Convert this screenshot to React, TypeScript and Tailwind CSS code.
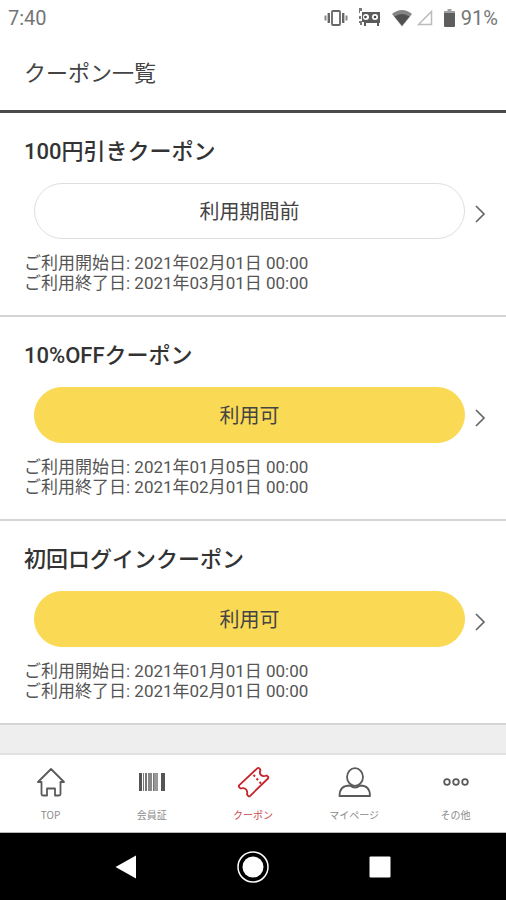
import type { ReactNode } from "react";

type Coupon = {
  title: string;
  status: string;
  available: boolean;
  start: string;
  end: string;
};

const coupons: Coupon[] = [
  { title: "100円引きクーポン", status: "利用期間前", available: false, start: "2021年02月01日 00:00", end: "2021年03月01日 00:00" },
  { title: "10%OFFクーポン", status: "利用可", available: true, start: "2021年01月05日 00:00", end: "2021年02月01日 00:00" },
  { title: "初回ログインクーポン", status: "利用可", available: true, start: "2021年01月01日 00:00", end: "2021年02月01日 00:00" },
];

function StatusBar() {
  return (
    <div className="flex h-9 items-center justify-between px-2 text-[20px] leading-5 text-[#757575]">
      <span>7:40</span>
      <div className="flex items-center">
        <svg className="mr-2.5 h-4 w-6" viewBox="0 0 24 16" fill="none" stroke="#666" aria-hidden="true">
          <rect x="8" y="1" width="8" height="14" rx="1" strokeWidth="1.8" />
          <path d="M4.8 3v10M19.2 3v10" strokeWidth="2.4" />
          <path d="M1.500 5.500v5M22.500 5.500v5" strokeWidth="2" stroke="#888" />
        </svg>
        <svg className="mr-2.5 h-5 w-[23px]" viewBox="0 0 23 20" aria-hidden="true">
          <path d="M1 0h3v3H2v2H1z" fill="#777" />
          <path d="M4 4h18v11h-1v3h-2v-3H8v3H6v-4H4z" fill="#5c5c5c" />
          <path d="M1 8h2v3H1zM1 13h3v4H2v-2H1z" fill="#777" />
          <circle cx="8" cy="9" r="3" fill="#fff" />
          <circle cx="17" cy="9" r="3" fill="#fff" />
          <circle cx="7.500" cy="9" r="1.3" fill="#444" />
          <circle cx="17" cy="9" r="1.3" fill="#444" />
        </svg>
        <svg className="mr-1 h-[18px] w-[22px]" viewBox="0 0 22 18" aria-hidden="true">
          <path d="M1 5Q11-3 21 5L11 17.500z" fill="#858585" />
          <path d="M3.500 7.500Q11 2.500 18.500 7.500L11 16.500z" fill="#505050" />
        </svg>
        <svg className="mr-[11px] h-4 w-4" viewBox="0 0 16 16" fill="none" stroke="#bcbcbc" strokeWidth="1.5" aria-hidden="true">
          <path d="M14.500 1.500v13h-13z" />
        </svg>
        <svg className="mr-1.5 h-[18px] w-[11px]" viewBox="0 0 11 18" aria-hidden="true">
          <path d="M3.500 0h4v2H11v3H0V2h3.500z" fill="#a0a0a0" />
          <path d="M0 4h11v13q0 1-1 1H1q-1 0-1-1z" fill="#5e5e5e" />
        </svg>
        <span>91%</span>
      </div>
    </div>
  );
}

function CouponCard({ coupon }: { coupon: Coupon }) {
  const look = coupon.available ? "border-[#fada54] bg-[#fada54]" : "border-[#dedede] bg-white";
  return (
    <li className="border-b-2 border-[#d4d4d4] bg-white px-6 pt-[25px] pb-[22px]">
      <h2 className="text-[22px] leading-7 font-medium text-[#333]">{coupon.title}</h2>
      <div className="-mr-3 mt-[17px] ml-2.5 flex items-center gap-2">
        <button type="button" className={`h-14 flex-1 rounded-full border pt-0.5 text-[20px] text-[#444] ${look}`}>
          {coupon.status}
        </button>
        <a href="#detail" aria-label={`${coupon.title}の詳細`} className="mt-1.5">
          <svg className="h-5 w-[21px]" viewBox="0 0 21 20" fill="none" stroke="#666" strokeWidth="1.7" aria-hidden="true">
            <path d="M3 2l8 8-8 8" />
          </svg>
        </a>
      </div>
      <div className="mt-3.5 text-[17px] leading-5 text-[#555]">
        <p>ご利用開始日: {coupon.start}</p>
        <p>ご利用終了日: {coupon.end}</p>
      </div>
    </li>
  );
}

function Tab({ label, active = false, children }: { label: string; active?: boolean; children: ReactNode }) {
  return (
    <a
      href="#tab"
      aria-current={active ? "page" : undefined}
      className={`flex flex-1 flex-col items-center pt-2.5 font-['Noto_Sans_CJK_JP',sans-serif] text-[10px] leading-4 ${active ? "text-[#cc4a50]" : "text-[#8c8c8c]"}`}
    >
      <svg className="mb-2 h-[34px] w-9" viewBox="0 0 36 34" fill="none" stroke={active ? "#c4242b" : "#5a5a5a"} strokeWidth="1.8" strokeLinejoin="round" aria-hidden="true">
        {children}
      </svg>
      <span>{label}</span>
    </a>
  );
}

const bars: [number, number, string][] = [
  [5, 3, "#555"],
  [9, 1, "#777"],
  [11, 2, "#777"],
  [14, 4, "#888"],
  [19, 1, "#777"],
  [20, 4, "#999"],
  [27, 4, "#555"],
];

function TabBar() {
  return (
    <nav className="flex h-20 border-t-2 border-b border-t-[#e2e2e2] border-b-[#b8b8b8] bg-white">
      <Tab label="TOP">
        <path d="M18 4L5 17h3.500v12q0 1.500 1.500 1.500h4v-7h8v7h4q1.500 0 1.500-1.500V17H31z" />
      </Tab>
      <Tab label="会員証">
        {bars.map(([x, width, fill]) => (
          <rect key={x} x={x} y="8" width={width} height="18" fill={fill} stroke="none" />
        ))}
      </Tab>
      <Tab label="クーポン" active>
        <path d="M22.500 3.200L4.300 20.200Q3.300 21.200 4.200 22.200L5.400 23.500Q9.500 22.300 11.200 24.500Q12.800 26.800 12 29.500L13.200 31Q14.200 31.800 15.200 30.800L33 13.500Q33.800 12.500 32.800 11.500L31.500 10.500Q28 12 26 10T25.500 5L24.500 3.500Q23.500 2.400 22.500 3.200z" />
        <path d="M18.500 10l1.500 1.500m1.500 2l1.500 1.500m1.500 2l1.500 1.500" strokeWidth="2" />
      </Tab>
      <Tab label="マイページ">
        <ellipse cx="19" cy="12" rx="8" ry="8.800" />
        <path d="M14 20.500Q3.500 20.500 3.500 31h30.500q0-10.500-10-10.500Q19 24.500 14 20.500z" />
      </Tab>
      <Tab label="その他">
        <circle cx="10" cy="17" r="2.800" />
        <circle cx="19" cy="17" r="2.800" />
        <circle cx="28" cy="17" r="2.800" />
      </Tab>
    </nav>
  );
}

function SystemBar() {
  return (
    <div className="grid h-[67px] grid-cols-3 items-center justify-items-center bg-black px-[12.5%]">
      <button type="button" aria-label="戻る">
        <svg className="h-8 w-8" viewBox="0 0 32 32" fill="#fff" aria-hidden="true">
          <path d="M4.500 16L25 4.500v23z" />
        </svg>
      </button>
      <button type="button" aria-label="ホーム">
        <svg className="h-8 w-8" viewBox="0 0 32 32" aria-hidden="true">
          <circle cx="16" cy="16" r="15" fill="none" stroke="#fff" strokeWidth="1.500" />
          <circle cx="16" cy="16" r="10.500" fill="#fff" />
        </svg>
      </button>
      <button type="button" aria-label="アプリ履歴">
        <svg className="h-8 w-8" viewBox="0 0 32 32" fill="#fff" aria-hidden="true">
          <rect x="5.500" y="5.500" width="21" height="21" rx="1" />
        </svg>
      </button>
    </div>
  );
}

export default function App() {
  return (
    <div className="flex min-h-screen flex-col bg-[#eeeeee] font-[Roboto,'Noto_Sans_CJK_JP',sans-serif]">
      <header className="border-b-3 border-[#4a4a4a] bg-white">
        <StatusBar />
        <h1 className="px-6 pt-6 pb-[22px] text-[22px] leading-7 text-[#444]">クーポン一覧</h1>
      </header>
      <main className="flex-1">
        <ul>
          {coupons.map((coupon) => (
            <CouponCard key={coupon.title} coupon={coupon} />
          ))}
        </ul>
      </main>
      <footer>
        <TabBar />
        <SystemBar />
      </footer>
    </div>
  );
}
